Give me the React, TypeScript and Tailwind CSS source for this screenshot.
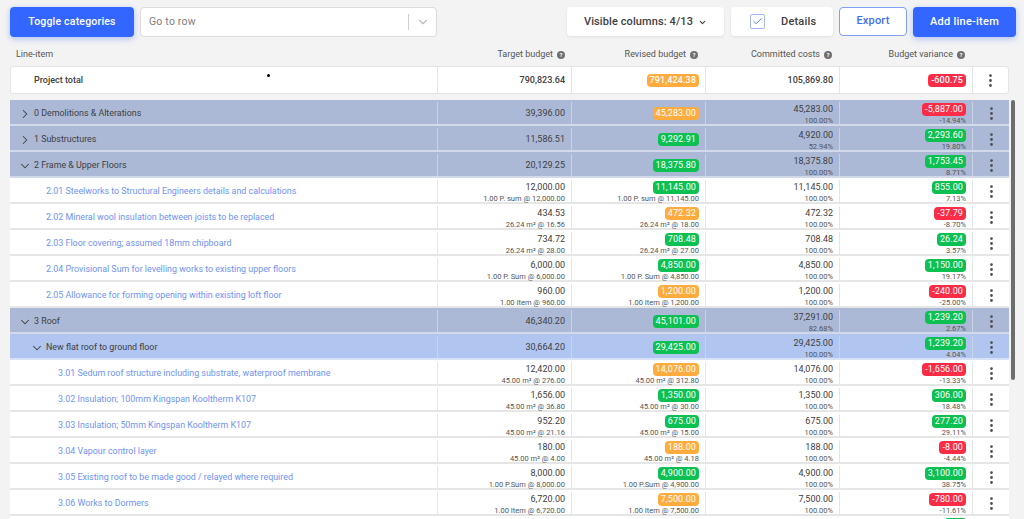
import React from "react";
import { ChevronDown, ChevronRight, Check, EllipsisVertical } from "lucide-react";

type Tone = "g" | "o" | "r";
type R = {
  kind: "cat" | "sub" | "item" | "deep";
  open?: boolean;
  name: string;
  target: string;
  targetSub?: string;
  revised: string;
  revisedTone: Tone;
  revisedSub?: string;
  committed: string;
  committedSub: string;
  variance: string;
  varianceTone: Tone;
  varianceSub: string;
};

const rows: R[] = [
  { kind: "cat", name: "0 Demolitions & Alterations", target: "39,396.00", revised: "45,283.00", revisedTone: "o", committed: "45,283.00", committedSub: "100.00%", variance: "-5,887.00", varianceTone: "r", varianceSub: "-14.94%" },
  { kind: "cat", name: "1 Substructures", target: "11,586.51", revised: "9,292.91", revisedTone: "g", committed: "4,920.00", committedSub: "52.94%", variance: "2,293.60", varianceTone: "g", varianceSub: "19.80%" },
  { kind: "cat", open: true, name: "2 Frame & Upper Floors", target: "20,129.25", revised: "18,375.80", revisedTone: "g", committed: "18,375.80", committedSub: "100.00%", variance: "1,753.45", varianceTone: "g", varianceSub: "8.71%" },
  { kind: "item", name: "2.01 Steelworks to Structural Engineers details and calculations", target: "12,000.00", targetSub: "1.00 P. sum @ 12,000.00", revised: "11,145.00", revisedTone: "g", revisedSub: "1.00 P. sum @ 11,145.00", committed: "11,145.00", committedSub: "100.00%", variance: "855.00", varianceTone: "g", varianceSub: "7.13%" },
  { kind: "item", name: "2.02 Mineral wool insulation between joists to be replaced", target: "434.53", targetSub: "26.24 m² @ 16.56", revised: "472.32", revisedTone: "o", revisedSub: "26.24 m² @ 18.00", committed: "472.32", committedSub: "100.00%", variance: "-37.79", varianceTone: "r", varianceSub: "-8.70%" },
  { kind: "item", name: "2.03 Floor covering; assumed 18mm chipboard", target: "734.72", targetSub: "26.24 m² @ 28.00", revised: "708.48", revisedTone: "g", revisedSub: "26.24 m² @ 27.00", committed: "708.48", committedSub: "100.00%", variance: "26.24", varianceTone: "g", varianceSub: "3.57%" },
  { kind: "item", name: "2.04 Provisional Sum for levelling works to existing upper floors", target: "6,000.00", targetSub: "1.00 P. Sum @ 6,000.00", revised: "4,850.00", revisedTone: "g", revisedSub: "1.00 P. Sum @ 4,850.00", committed: "4,850.00", committedSub: "100.00%", variance: "1,150.00", varianceTone: "g", varianceSub: "19.17%" },
  { kind: "item", name: "2.05 Allowance for forming opening within existing loft floor", target: "960.00", targetSub: "1.00 Item @ 960.00", revised: "1,200.00", revisedTone: "o", revisedSub: "1.00 Item @ 1,200.00", committed: "1,200.00", committedSub: "100.00%", variance: "-240.00", varianceTone: "r", varianceSub: "-25.00%" },
  { kind: "cat", open: true, name: "3 Roof", target: "46,340.20", revised: "45,101.00", revisedTone: "g", committed: "37,291.00", committedSub: "82.68%", variance: "1,239.20", varianceTone: "g", varianceSub: "2.67%" },
  { kind: "sub", open: true, name: "New flat roof to ground floor", target: "30,664.20", revised: "29,425.00", revisedTone: "g", committed: "29,425.00", committedSub: "100.00%", variance: "1,239.20", varianceTone: "g", varianceSub: "4.04%" },
  { kind: "deep", name: "3.01 Sedum roof structure including substrate, waterproof membrane", target: "12,420.00", targetSub: "45.00 m² @ 276.00", revised: "14,076.00", revisedTone: "o", revisedSub: "45.00 m² @ 312.80", committed: "14,076.00", committedSub: "100.00%", variance: "-1,656.00", varianceTone: "r", varianceSub: "-13.33%" },
  { kind: "deep", name: "3.02 Insulation; 100mm Kingspan Kooltherm K107", target: "1,656.00", targetSub: "45.00 m² @ 36.80", revised: "1,350.00", revisedTone: "g", revisedSub: "45.00 m² @ 30.00", committed: "1,350.00", committedSub: "100.00%", variance: "306.00", varianceTone: "g", varianceSub: "18.48%" },
  { kind: "deep", name: "3.03 Insulation; 50mm Kingspan Kooltherm K107", target: "952.20", targetSub: "45.00 m² @ 21.16", revised: "675.00", revisedTone: "g", revisedSub: "45.00 m² @ 15.00", committed: "675.00", committedSub: "100.00%", variance: "277.20", varianceTone: "g", varianceSub: "29.11%" },
  { kind: "deep", name: "3.04 Vapour control layer", target: "180.00", targetSub: "45.00 m² @ 4.00", revised: "188.00", revisedTone: "o", revisedSub: "45.00 m² @ 4.18", committed: "188.00", committedSub: "100.00%", variance: "-8.00", varianceTone: "r", varianceSub: "-4.44%" },
  { kind: "deep", name: "3.05 Existing roof to be made good / relayed where required", target: "8,000.00", targetSub: "1.00 P.Sum @ 8,000.00", revised: "4,900.00", revisedTone: "g", revisedSub: "1.00 P.Sum @ 4,900.00", committed: "4,900.00", committedSub: "100.00%", variance: "3,100.00", varianceTone: "g", varianceSub: "38.75%" },
  { kind: "deep", name: "3.06 Works to Dormers", target: "6,720.00", targetSub: "1.00 Item @ 6,720.00", revised: "7,500.00", revisedTone: "o", revisedSub: "1.00 Item @ 7,500.00", committed: "7,500.00", committedSub: "100.00%", variance: "-780.00", varianceTone: "r", varianceSub: "-11.61%" },
];

function Pill({ tone, children }: { tone: Tone; children: React.ReactNode }) {
  const c = tone === "g" ? "bg-[#0cc052]" : tone === "o" ? "bg-[#ffab3d]" : "bg-[#fb2d46]";
  return <span className={`${c} block rounded-[4px] px-[3px] text-white text-[9px] leading-[13px] tracking-[0.1px]`}>{children}</span>;
}

function Help() {
  return (
    <span className="inline-flex items-center justify-center w-[8px] h-[8px] rounded-full bg-[#6f6f6f] text-white text-[6px] leading-none font-bold ml-[4px]">?</span>
  );
}

function Kebab() {
  return <EllipsisVertical size={17} strokeWidth={2} className="text-[#505050]" />;
}

function Cell({ main, sub, w, sep, pt = "pt-[1px]" }: { main: React.ReactNode; sub?: string; w: string; sep: string; pt?: string }) {
  return (
    <div className={`${w} ${sep} ${pt} h-full border-l pr-[6px] flex flex-col justify-center items-end`}>
      <div className="leading-[13px] text-[9px]">{main}</div>
      {sub ? <div className="leading-[9px] text-[7.5px] text-[#555] whitespace-nowrap">{sub}</div> : null}
    </div>
  );
}

function Row({ r }: { r: R }) {
  const bg = r.kind === "cat" ? "bg-[#abb9d7] border-[#d2d9e8]" : r.kind === "sub" ? "bg-[#b0c5f0] border-[#d8e1f5]" : "bg-white border-[#e6e6e6]";
  const light = r.kind === "item" || r.kind === "deep";
  const sep = light ? "border-[#e6e6e6]" : "border-[#c9d2e6]";
  const pad = r.kind === "cat" ? "pl-[8px]" : r.kind === "sub" ? "pl-[20px]" : r.kind === "item" ? "pl-[36px]" : "pl-[48px]";
  return (
    <div className={`${bg} border-b-2 pt-[2px] h-[26px] shrink-0 flex items-center text-[#404040]`}>
      <div className={`w-[427px] h-full flex items-center pt-[2px] ${pad} text-[8.9px] whitespace-nowrap`}>
        {!light ? (
          <span className="w-[14px] h-[14px] flex items-center justify-center mr-[2px] mt-[-1px]">
            {r.open ? <ChevronDown size={14} strokeWidth={1.8} /> : <ChevronRight size={14} strokeWidth={1.8} />}
          </span>
        ) : null}
        <span className={light ? "text-[#6f92f5]" : "text-[#404040]"}>{r.name}</span>
      </div>
      <Cell w="w-[134px]" sep={sep} main={r.target} sub={r.targetSub} />
      <Cell w="w-[134px]" sep={sep} main={<Pill tone={r.revisedTone}>{r.revised}</Pill>} sub={r.revisedSub} />
      <Cell w="w-[134px]" sep={sep} main={r.committed} sub={r.committedSub} />
      <Cell w="w-[133px]" sep={sep} main={<Pill tone={r.varianceTone}>{r.variance}</Pill>} sub={r.varianceSub} />
      <div className={`w-[37px] h-full border-l ${sep} flex items-center justify-center`}>
        <Kebab />
      </div>
    </div>
  );
}

export default function App() {
  return (
    <div className="w-[1024px] h-[519px] overflow-hidden bg-[#f3f3f3] font-['Roboto',sans-serif] text-[#404040]">
      <div className="flex items-start pl-[10px] pr-[8px] pt-[7px] h-[47px]">
        <button className="w-[124px] h-[30px] rounded-[4px] bg-[#3366ff] text-white text-[10.5px] font-medium tracking-[0.2px] shadow-[0_2px_6px_rgba(51,102,255,0.35)]">Toggle categories</button>
        <div className="ml-[6px] w-[297px] h-[30px] bg-white border border-[#dcdcdc] rounded-[4px] flex items-center text-[10.5px] text-[#808080] tracking-[0.2px]">
          <span className="flex-1 pl-[8px]">Go to row</span>
          <span className="w-px h-[16px] bg-[#cfcfcf]" />
          <span className="w-[27px] flex justify-center"><ChevronDown size={14} className="text-[#bcbcbc]" /></span>
        </div>
        <div className="ml-auto flex items-start">
          <div className="w-[157px] h-[29px] bg-white rounded-[4px] shadow-[0_1px_3px_rgba(0,0,0,0.08)] flex items-center justify-center text-[11px] font-medium tracking-[0.1px] pt-[1px]">
            Visible columns: 4/13
            <ChevronDown size={9} strokeWidth={3} className="ml-[5px]" />
          </div>
          <div className="ml-[7px] w-[102px] h-[29px] bg-white rounded-[4px] shadow-[0_1px_3px_rgba(0,0,0,0.08)] flex items-center text-[11px] font-medium tracking-[0.2px]">
            <span className="ml-[19px] w-[15px] h-[15px] rounded-[2px] border-[1.5px] border-[#a3b8f5] flex items-center justify-center"><Check size={11} strokeWidth={1.8} className="text-[#3366ff]" /></span>
            <span className="ml-[16px] pt-[1px]">Details</span>
          </div>
          <button className="ml-[6px] w-[68px] h-[29px] rounded-[4px] bg-white border border-[#7f9ff5] text-[#3f6ef5] text-[11px] font-medium tracking-[0.2px]">Export</button>
          <button className="ml-[6px] w-[103px] h-[30px] rounded-[4px] bg-[#3366ff] text-white text-[11px] font-medium tracking-[0.25px] shadow-[0_2px_6px_rgba(51,102,255,0.35)]">Add line-item</button>
        </div>
      </div>

      <div className="flex h-[15px] items-center text-[9px] text-[#555] ml-[16px]">
        <div className="w-[421px]">Line-item</div>
        <div className="w-[134px] pr-[6px] flex items-center justify-end">Target budget<Help /></div>
        <div className="w-[134px] pr-[7px] flex items-center justify-end">Revised budget<Help /></div>
        <div className="w-[134px] pr-[7px] flex items-center justify-end">Committed costs<Help /></div>
        <div className="w-[133px] pr-[7px] flex items-center justify-end">Budget variance<Help /></div>
      </div>

      <div className="relative ml-[10px] mt-[4px] w-[999px] h-[28px] bg-white rounded-[3px] border border-[#e4e4e4] flex items-center font-medium text-[9px]">
        <div className="w-[426px] pl-[23px] pt-[1px]">Project total</div>
        <span className="absolute left-[256px] top-[7px] w-[3px] h-[3px] rounded-full bg-black" />
        <Cell w="w-[134px]" sep="border-[#e4e4e4]" main="790,823.64" />
        <Cell w="w-[134px]" sep="border-[#e4e4e4]" main={<Pill tone="o">791,424.38</Pill>} />
        <Cell w="w-[134px]" sep="border-[#e4e4e4]" main="105,869.80" />
        <Cell w="w-[133px]" sep="border-[#e4e4e4]" main={<Pill tone="r">-600.75</Pill>} />
        <div className="w-[36px] h-full border-l border-[#e4e4e4] flex items-center justify-center"><Kebab /></div>
      </div>

      <div className="relative mt-[6px]">
        <div className="ml-[10px] w-[999px] flex flex-col">
          {rows.map((r) => <Row key={r.name} r={r} />)}
          <div className="bg-white h-[26px] shrink-0 flex justify-end pr-[43px] pt-[2px]">
            <span className="w-[21px] h-[13px] rounded-[3px] bg-[#0cc052]" />
          </div>
        </div>
        <div className="absolute left-[1011px] top-0 w-[4px] h-[280px] rounded-full bg-[#6e6e6e]" />
      </div>
    </div>
  );
}
